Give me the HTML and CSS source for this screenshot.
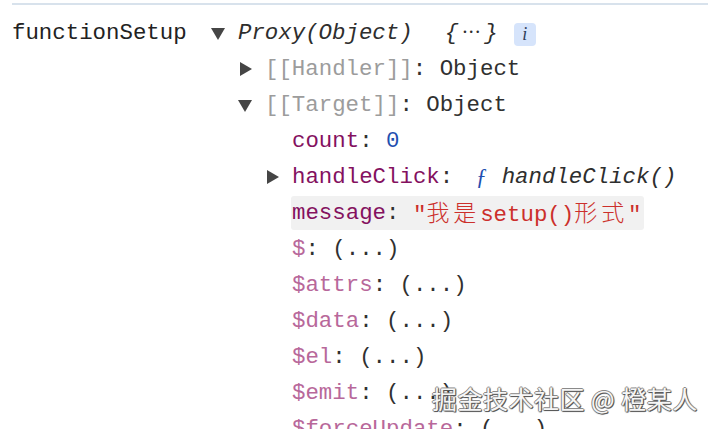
FILE: index.html
```
<!DOCTYPE html>
<html>
<head>
<meta charset="utf-8">
<link rel="stylesheet" href="styles.css">
</head>
<body>
<div class="console">
  <div class="root">
    <span class="var">functionSetup</span>
    <div class="tree">
      <div class="row"><span class="tri down"></span><span class="txt"><span class="it">Proxy(Object)</span><span class="gap"></span><span class="it brace">{<span class="ell">•••</span>}</span><span class="badge">i</span></span></div>
      <div class="children">
        <div class="row"><span class="tri right"></span><span class="txt"><span class="internal">[[Handler]]</span>: Object</span></div>
        <div class="row"><span class="tri down"></span><span class="txt"><span class="internal">[[Target]]</span>: Object</span></div>
        <div class="children">
          <div class="row"><span class="tri none"></span><span class="txt"><span class="key">count</span>: <span class="num">0</span></span></div>
          <div class="row"><span class="tri right"></span><span class="txt"><span class="key">handleClick</span>: <span class="fn">ƒ</span><span class="it">handleClick()</span></span></div>
          <div class="row"><span class="tri none"></span><span class="txt hl"><span class="key">message</span>: <span class="str">"<span class="cjk">我是</span>setup()<span class="cjk">形式</span>"</span></span></div>
          <div class="row"><span class="tri none"></span><span class="txt"><span class="key faded">$</span>: (...)</span></div>
          <div class="row"><span class="tri none"></span><span class="txt"><span class="key faded">$attrs</span>: (...)</span></div>
          <div class="row"><span class="tri none"></span><span class="txt"><span class="key faded">$data</span>: (...)</span></div>
          <div class="row"><span class="tri none"></span><span class="txt"><span class="key faded">$el</span>: (...)</span></div>
          <div class="row"><span class="tri none"></span><span class="txt"><span class="key faded">$emit</span>: (...)</span></div>
          <div class="row"><span class="tri none"></span><span class="txt"><span class="key faded">$forceUpdate</span>: (...)</span></div>
        </div>
      </div>
    </div>
  </div>
</div>
<div class="watermark">掘金技术社区 @ 橙某人</div>
</body>
</html>
```

FILE: styles.css
```
html, body {
  margin: 0;
  padding: 0;
  background: #fff;
  overflow: hidden;
  height: 429px;
}
body {
  font-family: "Liberation Mono", "Noto Sans CJK SC", monospace;
  font-size: 22.4px;
  color: #303030;
  position: relative;
}
.console {
  margin: 3px 0 0 12px;
  border-top: 2px solid #d8e2ec;
  padding-top: 10px;
}
.root {
  display: flex;
  align-items: flex-start;
}
.var {
  width: 199px;
  line-height: 36px;
  color: #222;
  white-space: pre;
  flex: none;
}
.tree {
  flex: 1;
}
.children {
  padding-left: 27px;
}
.row {
  display: flex;
  align-items: center;
  height: 36px;
  line-height: 36px;
  white-space: pre;
}
.tri {
  width: 27px;
  flex: none;
  display: flex;
  align-items: center;
}
.tri.down::before {
  content: "";
  border-left: 7px solid transparent;
  border-right: 7px solid transparent;
  border-top: 12px solid #454545;
  margin-top: 1px;
}
.tri.right::before {
  content: "";
  border-top: 7px solid transparent;
  border-bottom: 7px solid transparent;
  border-left: 12px solid #454545;
  margin-left: 2px;
}
.txt {
  display: flex;
  align-items: center;
  height: 34px;
}
.it {
  font-family: "Liberation Mono", "Liberation Serif", monospace;
  font-style: italic;
  color: #2e2e2e;
}
.gap {
  width: 32px;
}
.brace {
  display: inline-flex;
  align-items: center;
}
.ell {
  font-style: normal;
  font-size: 9px;
  letter-spacing: 1px;
  padding: 0 3px 0 4px;
  line-height: 1;
}
.badge {
  display: inline-flex;
  align-items: center;
  justify-content: center;
  width: 22px;
  height: 23px;
  margin-left: 16px;
  background: #d6e4fb;
  border-radius: 4px;
  font-family: "Liberation Serif", serif;
  font-style: italic;
  font-size: 18px;
  color: #2c3e5a;
  margin-top: 2px;
}
.internal {
  color: #9c9c9c;
}
.key {
  color: #84115f;
}
.key.faded {
  color: #b8689a;
}
.num {
  color: #1f4fb0;
}
.fn {
  color: #1f4fb0;
  font-style: italic;
  font-family: "Liberation Serif", serif;
  display: inline-block;
  width: 26px;
  margin-left: 9px;
}
.str {
  color: #cc2f2b;
}
.cjk {
  font-family: "Noto Sans CJK SC", sans-serif;
  font-size: 23px;
  letter-spacing: 3.9px;
  font-weight: 300;
}
.hl {
  background: #f1f1f1;
  border-radius: 3px;
  padding-right: 2px;
  margin-left: -1px;
  padding-left: 1px;
}
.watermark {
  position: absolute;
  left: 432px;
  top: 380px;
  font-family: "Noto Sans CJK SC", sans-serif;
  font-size: 25px;
  color: #f6f6f6;
  letter-spacing: 0.5px;
  text-shadow: 1px 1px 0 #5a5a5a, -1px 0 0 #8a8a8a, 0 -1px 0 #8a8a8a, 1px 0 1px #666, 0 1px 1px #666;
  white-space: pre;
}
```
